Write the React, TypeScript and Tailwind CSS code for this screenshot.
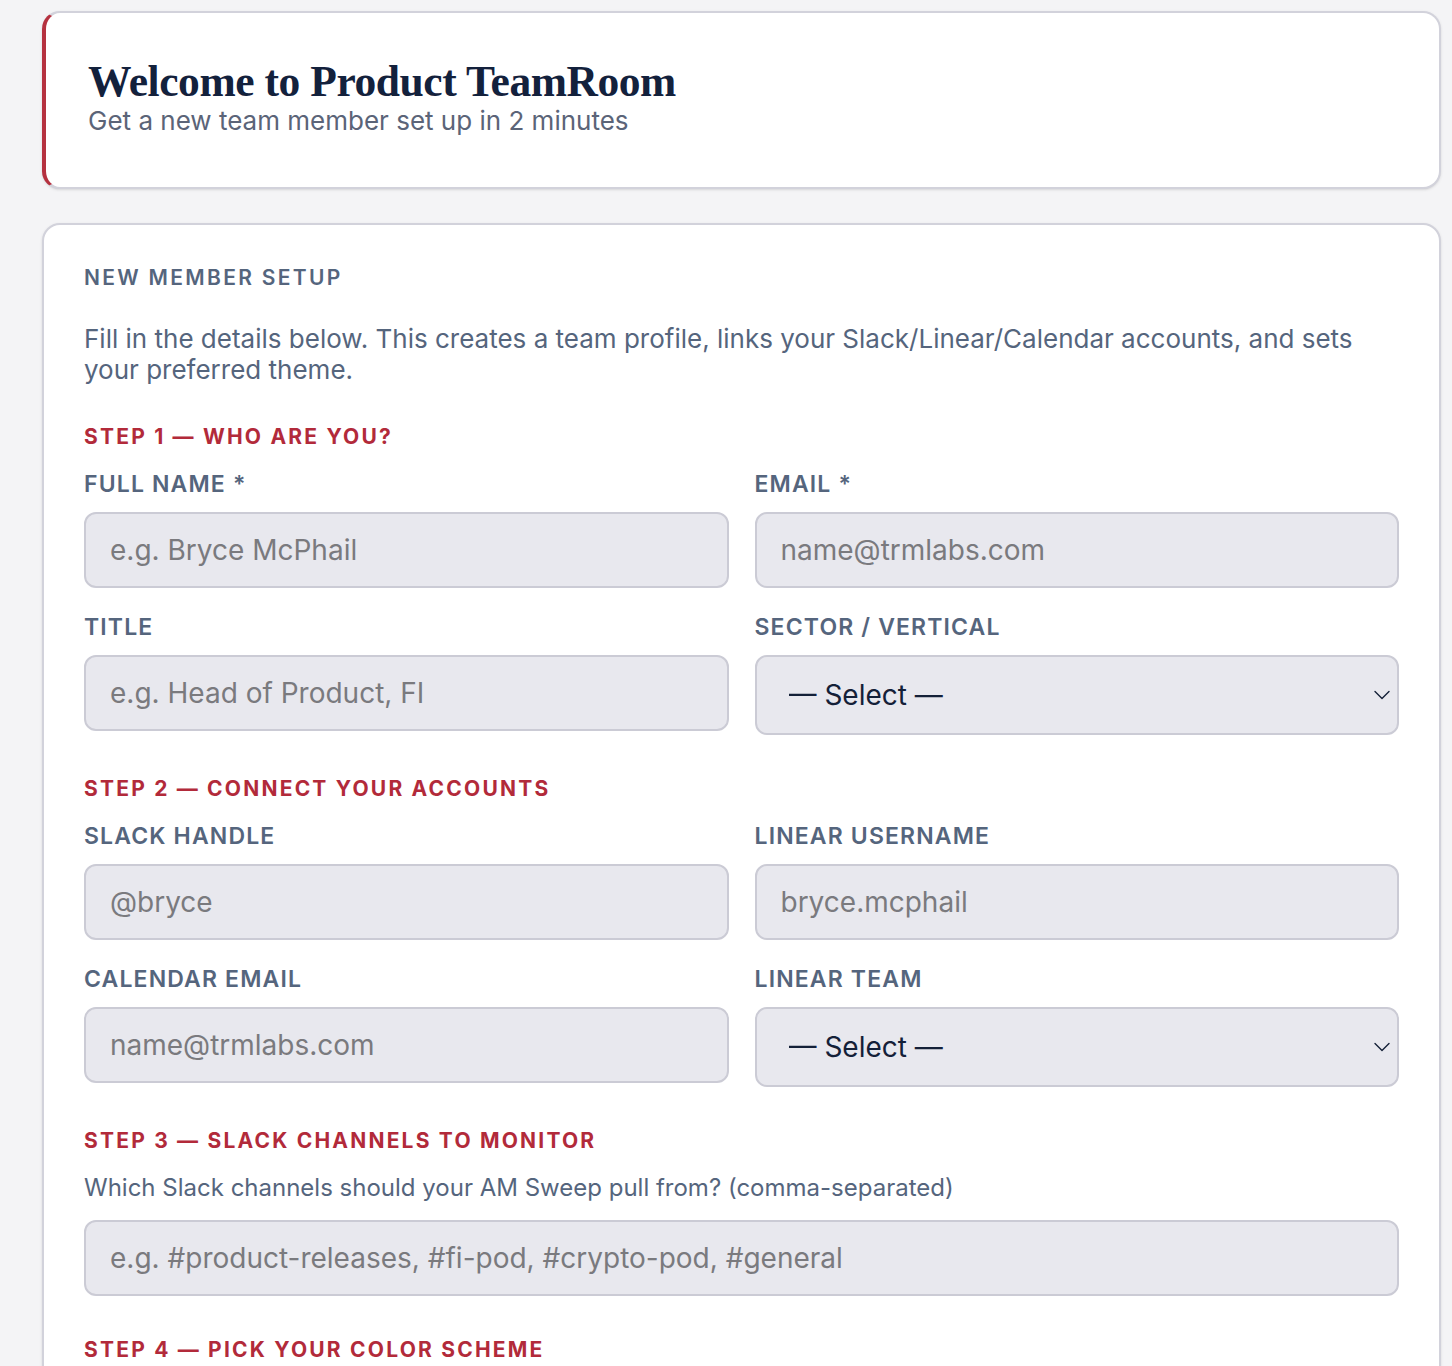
import { ChevronDown } from "lucide-react";

const labelCls =
  "block text-[23px] leading-[28px] font-semibold uppercase tracking-[0.05em] text-[#55657d] mb-[14px]";
const inputCls =
  "w-full h-[76px] rounded-[12px] bg-[#e8e8ee] border-2 border-[#cbcbd5] px-[24px] text-[28px] text-[#142038] placeholder:text-[#7a7a7e] focus:outline-none";
const stepCls =
  "text-[21px] leading-[28px] font-bold uppercase tracking-[0.105em] text-[#b22a3a]";

function Field({ label, placeholder }: { label: string; placeholder: string }) {
  return (
    <div>
      <label className={labelCls}>{label}</label>
      <input className={inputCls} placeholder={placeholder} />
    </div>
  );
}

function SelectField({ label, options }: { label: string; options: string[] }) {
  return (
    <div>
      <label className={labelCls}>{label}</label>
      <div className="relative">
        <select className="w-full h-[80px] appearance-none rounded-[12px] bg-[#e8e8ee] border-2 border-[#cbcbd5] pl-[32px] pr-[48px] text-[28px] text-[#142038] focus:outline-none">
          <option>— Select —</option>
          {options.map((o) => (
            <option key={o}>{o}</option>
          ))}
        </select>
        {/* native-looking chevron */}
        <ChevronDown
          className="absolute right-[3px] top-1/2 -translate-y-1/2 w-[28px] h-[28px] text-[#142038] pointer-events-none"
          strokeWidth={1.2}
        />
      </div>
    </div>
  );
}

export default function App() {
  return (
    <div
      className="min-h-screen bg-[#f4f4f6] pl-[42px] pr-[11px] pt-[11px] pb-10 flex flex-col gap-[34px]"
      style={{ fontFamily: "Inter, 'Noto Sans', sans-serif" }}
    >
      {/* Header card */}
      <div className="bg-white rounded-[18px] border-2 border-[#d2d2db] border-l-[4px] border-l-[#b5313f] shadow-sm h-[178px] pl-[42px] pt-[42px]">
        <h1
          className="text-[43.5px] leading-[52px] font-bold text-[#13213c] tracking-[-0.01em]"
          style={{ fontFamily: "'Liberation Serif', 'DejaVu Serif', serif" }}
        >
          Welcome to Product TeamRoom
        </h1>
        <p className="text-[26px] leading-[30px] text-[#5b6478] -mt-[1px]">
          Get a new team member set up in 2 minutes
        </p>
      </div>

      {/* Form card */}
      <div className="bg-white rounded-[18px] border-2 border-[#d2d2db] shadow-sm px-[40px] pt-[39px] pb-[40px]">
        <h2 className="text-[21px] leading-[28px] font-semibold uppercase tracking-[0.11em] text-[#55657d]">
          New member setup
        </h2>
        <p className="mt-[31px] text-[26px] leading-[31px] text-[#55657d]">
          Fill in the details below. This creates a team profile, links your Slack/Linear/Calendar accounts, and sets your preferred theme.
        </p>

        {/* Step 1 */}
        <div className={`${stepCls} mt-[38px] mb-[19px]`}>Step 1 — Who are you?</div>
        <div className="grid grid-cols-2 gap-x-[26px] gap-y-[25px] items-start">
          <Field label="Full name *" placeholder="e.g. Bryce McPhail" />
          <Field label="Email *" placeholder="name@trmlabs.com" />
          <Field label="Title" placeholder="e.g. Head of Product, FI" />
          <SelectField label="Sector / Vertical" options={["Financial Institutions", "Crypto", "Public Sector"]} />
        </div>

        {/* Step 2 */}
        <div className={`${stepCls} mt-[40px] mb-[19px]`}>Step 2 — Connect your accounts</div>
        <div className="grid grid-cols-2 gap-x-[26px] gap-y-[25px] items-start">
          <Field label="Slack handle" placeholder="@bryce" />
          <Field label="Linear username" placeholder="bryce.mcphail" />
          <Field label="Calendar email" placeholder="name@trmlabs.com" />
          <SelectField label="Linear team" options={["FI Pod", "Crypto Pod", "Platform"]} />
        </div>

        {/* Step 3 */}
        <div className={`${stepCls} mt-[40px] mb-[19px]`}>Step 3 — Slack channels to monitor</div>
        <p className="text-[24px] leading-[28px] text-[#55657d] mb-[18px]">
          Which Slack channels should your AM Sweep pull from? (comma-separated)
        </p>
        <input className={inputCls} placeholder="e.g. #product-releases, #fi-pod, #crypto-pod, #general" />

        {/* Step 4 */}
        <div className={`${stepCls} mt-[40px] mb-[19px]`}>Step 4 — Pick your color scheme</div>
        <div className="grid grid-cols-4 gap-[20px]">
          {["#13213c", "#b22a3a", "#1f6f5c", "#5b4b8a"].map((c) => (
            <div key={c} className="h-[90px] rounded-[12px] border-2 border-[#cbcbd5] bg-[#f4f4f6] flex items-center justify-center">
              <span className="w-[40px] h-[40px] rounded-full" style={{ backgroundColor: c }} />
            </div>
          ))}
        </div>
      </div>
    </div>
  );
}
